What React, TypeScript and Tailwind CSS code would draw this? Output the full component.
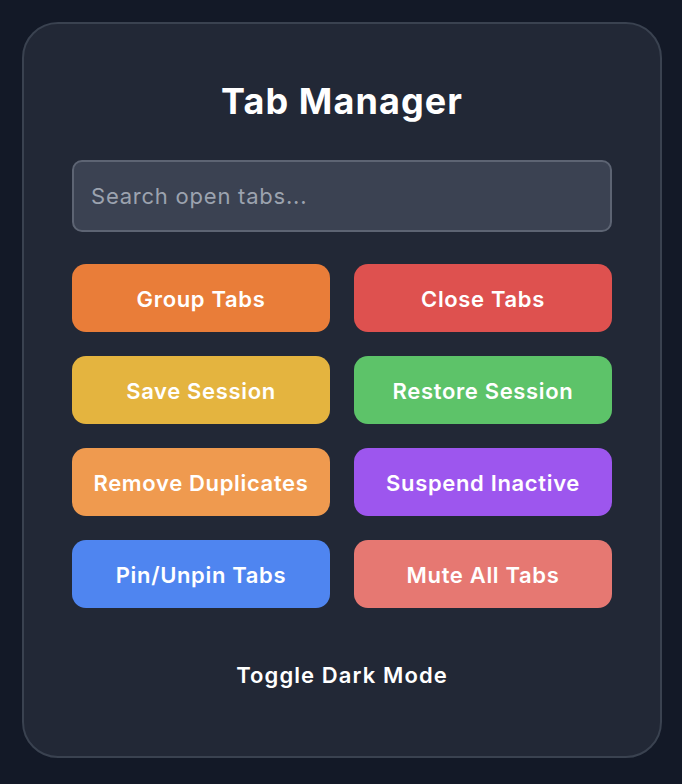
export default function App() {
  const actions = [
    { label: "Group Tabs", color: "bg-[#e97d39]" },
    { label: "Close Tabs", color: "bg-[#de514f]" },
    { label: "Save Session", color: "bg-[#e4b43f]" },
    { label: "Restore Session", color: "bg-[#5dc369]" },
    { label: "Remove Duplicates", color: "bg-[#ef9a4f]" },
    { label: "Suspend Inactive", color: "bg-[#9d56ee]" },
    { label: "Pin/Unpin Tabs", color: "bg-[#4f85f0]" },
    { label: "Mute All Tabs", color: "bg-[#e67872]" },
  ];

  return (
    <div
      className="min-h-screen bg-[#131927] p-[22px]"
      style={{ fontFamily: "Inter, 'Noto Sans', sans-serif" }}
    >
      <div className="w-[640px] rounded-[36px] border-2 border-[#3a4250] bg-[#222836] px-12 pt-[57px] pb-14">
        {/* HEADER */}
        <h1 className="text-center text-4xl tracking-[0.03em] font-bold text-white mb-[39px]">
          Tab Manager
        </h1>

        {/* SEARCH */}
        <input
          type="text"
          placeholder="Search open tabs..."
          className="w-full rounded-[10px] border-2 border-[#5d6473] bg-[#3b4252] px-[17px] py-5 text-[22px] leading-7 tracking-[0.035em] text-white placeholder:text-[#9ca3af] outline-none"
        />

        {/* ACTIONS */}
        <div className="grid grid-cols-2 gap-6 mt-8">
          {actions.map((a) => (
            <button
              key={a.label}
              className={`${a.color} h-[68px] pt-[2px] rounded-[14px] text-[22px] tracking-[0.03em] font-semibold text-white`}
            >
              {a.label}
            </button>
          ))}
        </div>

        {/* Toggle */}
        <button className="block mx-auto mt-10 pt-[13px] pb-[11px] text-[22px] leading-7 tracking-[0.05em] font-semibold text-white">
          Toggle Dark Mode
        </button>
      </div>
    </div>
  );
}
